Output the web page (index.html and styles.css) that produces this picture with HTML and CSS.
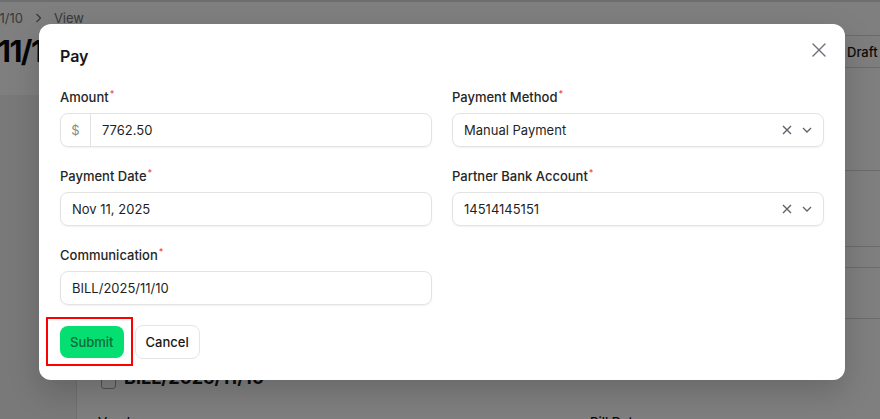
FILE: index.html
```html
<!DOCTYPE html>
<html lang="en">
<head>
  <meta charset="UTF-8" />
  <meta name="viewport" content="width=device-width, initial-scale=1.0" />
  <title>Pay bill</title>
  <link rel="stylesheet" href="styles.css">
</head>
<body>
  <div class="app">
    <div class="topbar"></div>
    <div class="crumbs">
      <span>Bills</span>
      <svg class="crumb-sep" width="7" height="10" viewBox="0 0 7 10"><path d="M1.5 1 L5.5 5 L1.5 9" fill="none" stroke="currentColor" stroke-width="1.3"/></svg>
      <span>BILL/2025/11/10</span>
      <svg class="crumb-sep" width="7" height="10" viewBox="0 0 7 10"><path d="M1.5 1 L5.5 5 L1.5 9" fill="none" stroke="currentColor" stroke-width="1.3"/></svg>
      <span>View</span>
    </div>
    <div class="headline">
      <div class="title-wrap">
        <h1 class="title">11/10</h1>
      </div>
      <div class="status">
        <span class="step">Draft</span>
        <span class="step">Posted</span>
      </div>
    </div>

    <div class="main">
      <div class="side"></div>
      <div class="content">
        <div class="blk blk-tall"></div>
        <div class="blk blk-tall"></div>
        <div class="blk blk-thin"></div>
        <div class="blk blk-mid"></div>
        <div class="doc">
          <div class="doc-head">
            <span class="checkbox"></span>
            <span class="doc-name">BILL/2025/11/10</span>
          </div>
          <div class="doc-meta">
            <span>Vendor</span>
            <span>Bill Date</span>
          </div>
        </div>
      </div>
    </div>
  </div>

  <div class="overlay">
    <div class="modal">
      <div class="modal-head">
        <h2 class="modal-title">Pay</h2>
        <button class="close" aria-label="Close">
          <svg width="14" height="14" viewBox="0 0 14 14"><path d="M1 1 L13 13 M13 1 L1 13" fill="none" stroke="currentColor" stroke-width="1.4" stroke-linecap="round"/></svg>
        </button>
      </div>

      <div class="form">
        <div class="field">
          <label>Amount<span class="req">*</span></label>
          <div class="input">
            <span class="prefix">$</span>
            <span class="value">7762.50</span>
          </div>
        </div>
        <div class="field">
          <label>Payment Method<span class="req">*</span></label>
          <div class="input select">
            <span class="value">Manual Payment</span>
            <svg class="clear" width="10" height="10" viewBox="0 0 10 10"><path d="M1 1 L9 9 M9 1 L1 9" fill="none" stroke="currentColor" stroke-width="1.4"/></svg>
            <svg class="chev" width="10" height="10" viewBox="0 0 10 10"><path d="M1 3 L5 7 L9 3" fill="none" stroke="currentColor" stroke-width="1.3"/></svg>
          </div>
        </div>
        <div class="field">
          <label>Payment Date<span class="req">*</span></label>
          <div class="input">
            <span class="value">Nov 11, 2025</span>
          </div>
        </div>
        <div class="field">
          <label>Partner Bank Account<span class="req">*</span></label>
          <div class="input select">
            <span class="value">14514145151</span>
            <svg class="clear" width="10" height="10" viewBox="0 0 10 10"><path d="M1 1 L9 9 M9 1 L1 9" fill="none" stroke="currentColor" stroke-width="1.4"/></svg>
            <svg class="chev" width="10" height="10" viewBox="0 0 10 10"><path d="M1 3 L5 7 L9 3" fill="none" stroke="currentColor" stroke-width="1.3"/></svg>
          </div>
        </div>
        <div class="field">
          <label>Communication<span class="req">*</span></label>
          <div class="input">
            <span class="value">BILL/2025/11/10</span>
          </div>
        </div>
      </div>

      <div class="actions">
        <span class="highlight">
          <button class="btn btn-submit">Submit</button>
        </span>
        <button class="btn btn-cancel">Cancel</button>
      </div>
    </div>
  </div>
</body>
</html>
```

FILE: styles.css
```css
* {
  box-sizing: border-box;
}

body {
  margin: 0;
  width: 880px;
  height: 419px;
  overflow: hidden;
  background: #ffffff;
  font-family: 'Inter', 'Noto Sans', sans-serif;
  color: #171717;
  position: relative;
}

/* page behind the dialog */

.app {
  height: 419px;
  display: flex;
  flex-direction: column;
}

.app > * {
  flex-shrink: 0;
}

.topbar {
  height: 2px;
  background: #dcdcdc;
}

.crumbs {
  width: 84px;
  margin-top: 8px;
  height: 16px;
  display: flex;
  justify-content: flex-end;
  align-items: center;
  gap: 12px;
  white-space: nowrap;
  font-size: 13px;
  line-height: 16px;
  color: #737373;
}

.crumb-sep {
  flex: none;
}

.headline {
  display: flex;
  align-items: flex-start;
  margin-top: 7px;
  height: 62px;
}

.title-wrap {
  width: 835px;
  flex: none;
}

.title {
  margin: 0 0 0 -2px;
  font-size: 30px;
  line-height: 36px;
  font-weight: 700;
  color: #0a0a0a;
  letter-spacing: -1.5px;
}

.status {
  margin-top: 2px;
  height: 33px;
  display: flex;
  align-items: center;
  gap: 24px;
  padding-left: 12px;
  border-top: 1px solid #d4d4d4;
  border-bottom: 1px solid #d4d4d4;
  background: #fdfdfd;
  font-size: 13px;
  font-weight: 500;
  white-space: nowrap;
}

.main {
  flex: 1;
  display: flex;
}

.side {
  width: 76px;
  background: #f2f2f2;
}

.content {
  flex: 1;
  border-left: 1px solid #e0e0e0;
  background: #ffffff;
}

.blk {
  border-bottom: 1px solid #d6d6d6;
}

.blk-tall {
  height: 76px;
}

.blk-thin {
  height: 21px;
}

.blk-mid {
  height: 51px;
}

.doc {
  padding: 48px 0 0 21px;
}

.doc-head {
  display: flex;
  align-items: flex-end;
  gap: 8px;
  margin-left: 3px;
  height: 22px;
}

.checkbox {
  width: 15px;
  height: 15px;
  border: 1px solid #a3a3a3;
  border-radius: 3px;
  background: #ffffff;
}

.doc-name {
  font-size: 18px;
  line-height: 22px;
  font-weight: 700;
}

.doc-meta {
  margin-top: 25px;
  display: grid;
  grid-template-columns: 492px 1fr;
  font-size: 13px;
  font-weight: 500;
}

/* dialog */

.overlay {
  position: absolute;
  inset: 0;
  background: rgba(0, 0, 0, 0.5);
  padding: 24px 0 0 39px;
}

.modal {
  position: relative;
  width: 806px;
  background: #ffffff;
  border-radius: 12px;
  padding: 20px 21px 21px;
  box-shadow: 0 12px 32px rgba(0, 0, 0, 0.18);
}

.modal-head {
  height: 24px;
}

.modal-title {
  margin: 0;
  font-size: 16px;
  line-height: 24px;
  font-weight: 600;
  color: #171717;
}

.close {
  position: absolute;
  top: 16px;
  right: 16px;
  width: 20px;
  height: 20px;
  padding: 0;
  border: none;
  background: none;
  display: flex;
  align-items: center;
  justify-content: center;
  color: #6b6f76;
}

.form {
  margin-top: 21px;
  display: grid;
  grid-template-columns: 1fr 1fr;
  column-gap: 20px;
  row-gap: 21px;
}

.field label {
  display: block;
  font-size: 13px;
  line-height: 16px;
  font-weight: 500;
  color: #262626;
  margin-bottom: 8px;
}

.req {
  color: #ef4444;
  font-size: 9px;
  line-height: 9px;
  vertical-align: top;
  margin-left: 1px;
}

.input {
  height: 34px;
  display: flex;
  align-items: center;
  border: 1px solid #e3e3e3;
  border-radius: 8px;
  box-shadow: 0 1px 2px rgba(0, 0, 0, 0.06);
  padding: 0 11px;
  font-size: 13px;
  color: #1f1f1f;
}

.input:has(.prefix) {
  padding-left: 0;
}

.prefix {
  width: 30px;
  align-self: stretch;
  display: flex;
  align-items: center;
  justify-content: center;
  border-right: 1px solid #e3e3e3;
  color: #8a8a8a;
  margin-right: 11px;
}

.value {
  flex: 1;
  white-space: nowrap;
}

.select .clear,
.select .chev {
  flex: none;
  color: #5f6369;
}

.select .chev {
  margin-left: 10px;
}

.actions {
  margin-top: 20px;
  display: flex;
  align-items: center;
  gap: 11px;
}

.highlight {
  position: relative;
  display: flex;
}

.highlight::after {
  content: '';
  position: absolute;
  top: -9px;
  right: -9px;
  bottom: -8px;
  left: -14px;
  border: 2px solid #ff0000;
  pointer-events: none;
}

.btn {
  font-family: inherit;
  font-size: 13px;
  font-weight: 500;
  border-radius: 8px;
  padding: 0 10px;
  cursor: pointer;
}

.btn-submit {
  height: 32px;
  border: none;
  background: #05df72;
  color: #0f6a3a;
}

.btn-cancel {
  height: 34px;
  border: 1px solid #e5e5e5;
  background: #ffffff;
  color: #171717;
}
```
